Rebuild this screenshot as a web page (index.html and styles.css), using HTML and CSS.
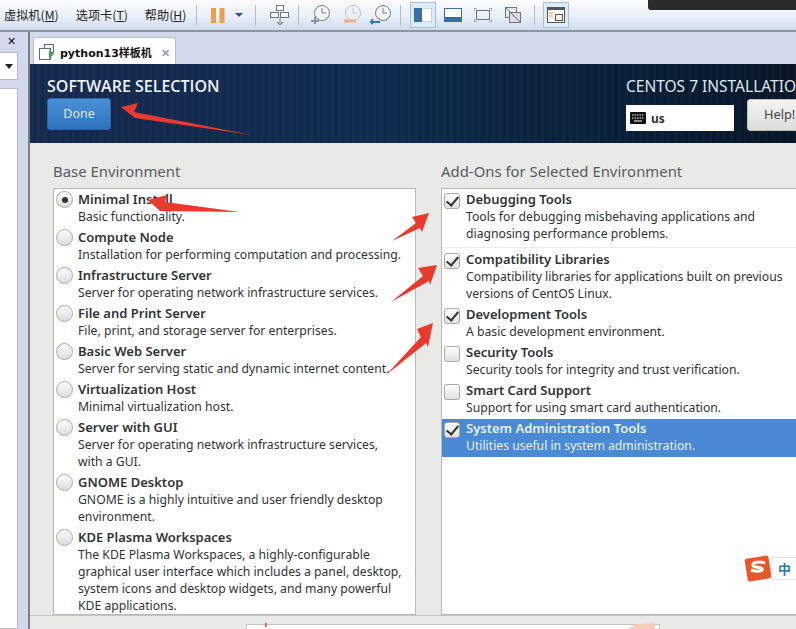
FILE: index.html
```html
<!DOCTYPE html>
<html lang="en">
<head>
<meta charset="utf-8">
<title>Software Selection</title>
<link rel="stylesheet" href="styles.css">
</head>
<body>
<header class="toolbar">
  <nav class="menu"><span>虚拟机(<u>M</u>)</span><span>选项卡(<u>T</u>)</span><span>帮助(<u>H</u>)</span></nav>
  <i class="sep"></i>
  <svg class="ico pause" width="34" height="15" viewBox="0 0 34 15"><rect x="0" y="0" width="5" height="15" fill="#e8a04c"/><rect x="8.500" y="0" width="5" height="15" fill="#e8a04c"/><path d="M24 5h8l-4 4z" fill="#2f4f86"/></svg>
  <i class="sep"></i>
  <svg class="ico net" width="24" height="24" viewBox="0 0 24 24" fill="none" stroke="#6b7480"><rect x="8.500" y="2.500" width="7" height="5" fill="#fff"/><rect x="2.500" y="9.500" width="8" height="5" fill="#fff"/><rect x="12.500" y="9.500" width="8" height="5" fill="#fff"/><path d="M12 15v6M9 19l3 3 3-3"/></svg>
  <i class="sep"></i>
  <svg class="ico clock1" width="22" height="24" viewBox="0 0 22 24" fill="none" stroke="#77808a"><circle cx="12" cy="10" r="7.500" fill="#f4f6f8"/><path d="M12 5v5h4"/><path d="M5 14v7M1 18h8" stroke="#8a93a0" stroke-width="2"/></svg>
  <svg class="ico clock2" width="22" height="24" viewBox="0 0 22 24" fill="none" stroke="#bcc4cc"><circle cx="12" cy="10" r="7.500"/><path d="M12 5v5h4"/><path d="M3 18h12" stroke="#eab08c" stroke-width="3"/></svg>
  <svg class="ico clock3" width="24" height="24" viewBox="0 0 24 24" fill="none" stroke="#77808a"><circle cx="14" cy="10" r="7.500" fill="#f4f6f8"/><path d="M14 5v5h4"/><path d="M2 19h9M4 16l-2 3 2 2" stroke="#3a76b4" stroke-width="2"/></svg>
  <i class="sep"></i>
  <span class="tool on first"><svg width="18" height="14" viewBox="0 0 18 14"><rect width="18" height="14" fill="#fff" stroke="#8aa"/><rect width="8" height="14" fill="#3a6ea8"/></svg></span>
  <span class="tool"><svg width="18" height="14" viewBox="0 0 18 14"><rect width="18" height="14" fill="#3a6ea8"/><rect y="1" x="1" width="16" height="8" fill="#fff"/></svg></span>
  <span class="tool"><svg width="18" height="14" viewBox="0 0 18 14" fill="none" stroke="#6b7480"><rect x="2.500" y="2.500" width="13" height="9"/><path d="M0 3V0h3M15 0h3v3M18 11v3h-3M3 14H0v-3"/></svg></span>
  <span class="tool last"><svg width="18" height="18" viewBox="0 0 18 18" fill="none" stroke="#6b7480"><rect x="1.500" y="1.500" width="11" height="10" fill="#eee"/><rect x="5.500" y="6.500" width="11" height="10" fill="#ddd"/><path d="M1 1l16 16"/></svg></span>
  <i class="sep"></i>
  <span class="tool on end"><svg width="18" height="16" viewBox="0 0 18 16" fill="none" stroke="#555"><rect x=".5" y=".5" width="17" height="15" fill="#f6f6f2"/><path d="M0 1.500h18" stroke-width="3"/><rect x="8.500" y="7.500" width="7" height="6"/><path d="M2 6h4M2 9h4" stroke="#e8a04c"/></svg></span>
</header>
<div class="dark-window"></div>

<div class="workspace">
  <aside class="side">
    <div class="side-close">✕</div>
    <div class="side-drop"><b></b></div>
    <div class="side-list"></div>
  </aside>
  <main class="vm">
    <div class="tabs">
      <div class="tab">
        <svg width="17" height="17" viewBox="0 0 17 17" fill="none" stroke="#667"><rect x="5.500" y=".5" width="9" height="8" fill="#eee"/><rect x=".5" y="4.500" width="11" height="11" fill="#fff"/><path d="M10 6l5 4-5 5z" fill="#3aa655" stroke="none"/></svg>
        <span class="tab-name">python13样板机</span>
        <span class="tab-x">✕</span>
      </div>
    </div>
    <section class="head">
      <div class="head-left">
        <h1>SOFTWARE SELECTION</h1>
        <button class="done">Done</button>
      </div>
      <div class="head-right">
        <div class="centos">CENTOS 7 INSTALLATION</div>
        <div class="head-controls">
          <div class="kbd">
            <svg width="16" height="12" viewBox="0 0 16 12"><rect width="16" height="12" rx="1" fill="#111"/><path d="M2 3h12M2 6h12" stroke="#fff" stroke-dasharray="1.500 1"/><path d="M4 9h8" stroke="#fff"/></svg>
            <b>us</b>
          </div>
          <button class="help">Help!</button>
        </div>
      </div>
    </section>
    <section class="content">
      <div class="col col-left">
        <h2>Base Environment</h2>
        <div class="list">
          <div class="row"><i class="radio sel"></i><div><b>Minimal Install</b><p>Basic functionality.</p></div></div>
          <div class="row"><i class="radio"></i><div><b>Compute Node</b><p>Installation for performing computation and processing.</p></div></div>
          <div class="row"><i class="radio"></i><div><b>Infrastructure Server</b><p>Server for operating network infrastructure services.</p></div></div>
          <div class="row"><i class="radio"></i><div><b>File and Print Server</b><p>File, print, and storage server for enterprises.</p></div></div>
          <div class="row"><i class="radio"></i><div><b>Basic Web Server</b><p>Server for serving static and dynamic internet content.</p></div></div>
          <div class="row"><i class="radio"></i><div><b>Virtualization Host</b><p>Minimal virtualization host.</p></div></div>
          <div class="row"><i class="radio"></i><div><b>Server with GUI</b><p>Server for operating network infrastructure services,<br>with a GUI.</p></div></div>
          <div class="row"><i class="radio"></i><div><b>GNOME Desktop</b><p>GNOME is a highly intuitive and user friendly desktop<br>environment.</p></div></div>
          <div class="row"><i class="radio"></i><div><b>KDE Plasma Workspaces</b><p>The KDE Plasma Workspaces, a highly-configurable<br>graphical user interface which includes a panel, desktop,<br>system icons and desktop widgets, and many powerful<br>KDE applications.</p></div></div>
        </div>
      </div>
      <div class="col col-right">
        <h2>Add-Ons for Selected Environment</h2>
        <div class="list">
          <div class="row ruled"><i class="check on"></i><div><b>Debugging Tools</b><p>Tools for debugging misbehaving applications and<br>diagnosing performance problems.</p></div></div>
          <div class="row"><i class="check on"></i><div><b>Compatibility Libraries</b><p>Compatibility libraries for applications built on previous<br>versions of CentOS Linux.</p></div></div>
          <div class="row"><i class="check on"></i><div><b>Development Tools</b><p>A basic development environment.</p></div></div>
          <div class="row"><i class="check"></i><div><b>Security Tools</b><p>Security tools for integrity and trust verification.</p></div></div>
          <div class="row"><i class="check"></i><div><b>Smart Card Support</b><p>Support for using smart card authentication.</p></div></div>
          <div class="row active"><i class="check on"></i><div><b>System Administration Tools</b><p>Utilities useful in system administration.</p></div></div>
        </div>
      </div>
    </section>
    <div class="foot"><div class="foot-box"></div></div>
  </main>
</div>

<svg class="arrows" width="796" height="629" viewBox="0 0 796 629" fill="#ea3a2e">
  <polygon points="121,107 138,103 134,112 252,135 135,118"/>
  <polygon points="148,200 167,195 165,202 240,212 160,211"/>
  <polygon points="429,213 412,217 416,223 392,241 420,228 422,232"/>
  <polygon points="437,265 418,268 423,276 391,302 429,281 430,285"/>
  <polygon points="433,323 417,329 421,337 386,375 426,343 428,347"/>
  <rect x="265" y="623" width="1.500" height="4"/>
  <polygon points="628,629 636,624 655,623 655,629" fill="#f6cdbb"/>
</svg>
<div class="ime">
  <svg width="29" height="29" viewBox="0 0 29 29"><rect x="2" y="3" width="24" height="23" rx="2" transform="rotate(-9 14 14)" fill="#e8572a"/><path d="M21 9q-6-2-11 0-3 3 2 4l5 1q3 2-1 3-4 1-9-1" fill="none" stroke="#fff" stroke-width="3"/></svg>
  <span>中</span>
</div>
```

FILE: styles.css
```css
* { box-sizing: border-box; }
html, body { margin: 0; height: 629px; overflow: hidden; }
body { width: 796px; position: relative; background: #d3d9ec; font-family: "Noto Sans", "Noto Sans CJK SC", sans-serif; color: #2e3436; }

.toolbar { height: 32px; display: flex; align-items: center; background: linear-gradient(#fbfcfe, #e9f0f9 55%, #cfdcec); border-bottom: 2px solid #8e949c; overflow: hidden; }
.menu { width: 196px; padding-left: 4px; display: flex; gap: 17px; font-size: 12.200px; color: #222; font-family: "Noto Sans CJK SC", sans-serif; white-space: nowrap; }
.menu u { text-decoration: underline; }
.sep { width: 1px; height: 20px; background: #b4bcc8; flex: none; }
.ico { flex: none; }
.pause { margin: 0 10px 0 14px; }
.net { margin: 0 6px 0 12px; }
.clock1 { margin: 0 0 0 11px; }
.clock2 { margin: 0 0 0 9px; }
.clock3 { margin: 0 7px 0 6px; }
.tool { width: 26px; height: 26px; display: flex; align-items: center; justify-content: center; flex: none; margin-right: 4px; }
.tool.on { background: #dcebf9; border: 1px solid #a6c0dc; }
.tool.first { margin-left: 9px; }
.tool.last { margin-right: 8px; }
.tool.end { margin-left: 8px; }

.dark-window { position: absolute; top: 0; left: 648px; width: 148px; height: 10px; background: #2a2a2a; border-radius: 0 0 0 3px; }

.workspace { height: 597px; display: flex; }
.side { width: 28px; flex: none; padding-right: 10px; display: flex; flex-direction: column; }
.side-close { height: 20px; text-align: right; padding-right: 2px; font-size: 11px; line-height: 18px; color: #111; }
.side-drop { height: 28px; background: #fff; border: 1px solid #b8bec8; border-left: 0; display: flex; align-items: center; justify-content: flex-end; padding-right: 4px; }
.side-drop b { border: 4px solid transparent; border-top: 5px solid #222; border-bottom: 0; }
.side-list { flex: 1; margin-top: 8px; background: #fff; border: 1px solid #b8bec8; border-left: 0; }

.vm { flex: 1; min-width: 0; border-left: 2px solid #7b7f86; display: flex; flex-direction: column; }
.tabs { height: 32px; padding: 5px 0 0 3px; flex: none; }
.tab { width: 143px; height: 27px; background: #fff; border: 1px solid #b8bec8; border-bottom: 0; border-radius: 3px 3px 0 0; display: flex; align-items: center; padding: 2px 0 0 5px; gap: 4px; }
.tab-name { font: bold 11px "DejaVu Sans", "Noto Sans CJK SC", sans-serif; color: #111; white-space: nowrap; width: 97px; }
.tab-x { font-size: 11px; font-weight: bold; color: #8ea0b4; }

.head { height: 79px; flex: none; padding: 13px 0 0 17px; display: flex; justify-content: space-between; color: #fff; background: repeating-linear-gradient(90deg, rgba(255,255,255,.018) 0 3px, transparent 3px 7px), linear-gradient(90deg, #14294d, #0f2a4d 45%, #092039 75%, #071526); }
.head-left { display: flex; flex-direction: column; }
h1 { margin: 0; font: 600 16px/18px "Open Sans", sans-serif; color: #eef2f6; height: 21px; white-space: nowrap; }
.done { width: 64px; height: 32px; padding: 0 0 2px; border: 1px solid #2a66a8; border-radius: 3px; background: linear-gradient(#4a90d8, #2f72bb); color: #dbe9f6; font: 12.500px "Noto Sans", sans-serif; }
.head-right { width: 170px; overflow: hidden; flex: none; }
.centos { font: 15.500px/18px "Noto Sans", sans-serif; color: #dfe8ef; height: 21px; white-space: nowrap; }
.head-controls { display: flex; gap: 13px; align-items: flex-end; height: 33px; }
.kbd { width: 108px; height: 26px; flex: none; background: #fff; color: #2e3436; display: flex; align-items: center; gap: 5px; padding-left: 4px; font-size: 12px; }
.help { width: 60px; height: 32px; flex: none; padding: 0 0 2px 16px; border: 1px solid #c0c0bc; border-radius: 3px; background: linear-gradient(#f4f4f2, #dcdcd8); color: #444; font: 12.800px "Noto Sans", sans-serif; text-align: left; white-space: nowrap; }

.content { flex: 1; min-height: 0; background: #e9e9e7; padding: 19px 0 0 23px; display: flex; gap: 25px; }
.col { display: flex; flex-direction: column; flex: none; }
.col-left { width: 363px; }
.col-right { width: 355px; }
h2 { margin: 0 0 7px; font: 400 14.900px/19px "Noto Sans", sans-serif; color: #555c60; white-space: nowrap; }
.list { flex: 1; background: #fff; border: 1px solid #b9b9b5; padding-top: 2px; overflow: hidden; }
.col-right .list { border-right: 0; }
.row { display: flex; padding: 0 0 4px 2px; gap: 4px; font-size: 12.200px; line-height: 17px; }
.row b { display: block; font-size: 13px; font-weight: 600; color: #2e3436; white-space: nowrap; }
.row p { margin: 0; white-space: nowrap; color: #2e3436; }
.radio { width: 17px; height: 17px; flex: none; margin-right: 1px; border-radius: 50%; border: 1px solid #aaa; background: linear-gradient(#fdfdfd, #dcdcdc); display: flex; align-items: center; justify-content: center; }
.radio.sel::before { content: ""; width: 6px; height: 6px; border-radius: 50%; background: #333; }
.check { width: 16px; height: 16px; flex: none; margin: 2px 2px 0 0; border-radius: 3px; border: 1px solid #a8a8a8; background: linear-gradient(#fdfdfd, #e2e2e2); position: relative; }
.check.on::before { content: ""; position: absolute; left: 4px; top: 0; width: 5px; height: 10px; border: solid #2e3436; border-width: 0 2.500px 2.500px 0; transform: rotate(40deg); }
.ruled { padding-bottom: 5px; border-bottom: 1px solid #ececec; margin-bottom: 3px; }
.active { background: #4a8ad4; margin-top: -1px; padding-top: 1px; padding-bottom: 3px; }
.active b, .active p { color: #e8f1fa; }

.foot { height: 14px; flex: none; background: #e9e9e7; padding: 8px 0 0 216px; border-top: 1px solid #c4c4c0; }
.foot-box { width: 414px; height: 6px; background: #fff; border: 1px solid #c4c4c0; border-bottom: 0; }

.arrows { position: absolute; top: 0; left: 0; pointer-events: none; }
.ime { position: absolute; left: 744px; top: 554px; display: flex; align-items: center; }
.ime span { margin-left: -2px; width: 26px; height: 23px; background: #fff; border: 1px solid #e4e4e4; border-right: 0; color: #1e7ea8; font: bold 13px/21px "Noto Sans CJK SC", sans-serif; text-align: center; }
```
